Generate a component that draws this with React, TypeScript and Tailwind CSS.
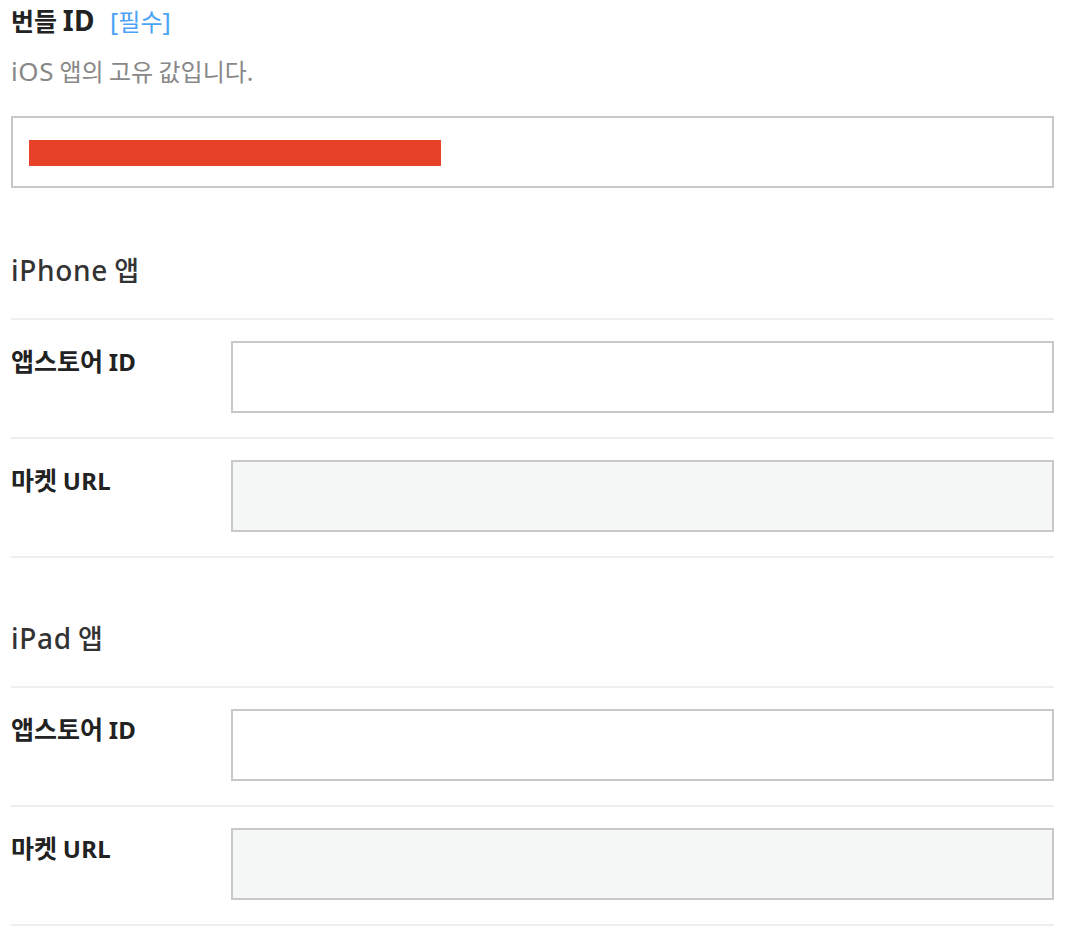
import React from "react";

const font = { fontFamily: '"Noto Sans CJK KR", "Noto Sans", sans-serif' };

function Row({ label, latin, disabled }: { label: string; latin: string; disabled?: boolean }) {
  return (
    <div className="flex border-t-2 border-[#eeeeee] pt-[21px] pb-[24px]">
      <div className="w-[220px] shrink-0 pt-[3px]">
        <div className="h-[32px] whitespace-nowrap text-[25px] leading-[32px] font-bold text-[#222222]">
          {label}{" "}
          <span className="font-['Noto_Sans'] text-[24px] tracking-[0.3px]">{latin}</span>
        </div>
      </div>
      <div
        className={`h-[72px] flex-1 border-2 border-[#c8c8c8] ${disabled ? "bg-[#f6f8f8]" : "bg-white"}`}
      />
    </div>
  );
}

function Section({ latin, top }: { latin: string; top: string }) {
  return (
    <div>
      <div
        className={`${top} mb-[30px] h-[36px] whitespace-nowrap text-[27px] leading-[36px] font-medium text-[#333333]`}
      >
        <span className="font-['Noto_Sans'] text-[28px] tracking-[0.7px]">{latin}</span> 앱
      </div>
      <Row label="앱스토어" latin="ID" />
      <Row label="마켓" latin="URL" disabled />
      <div className="h-[2px] bg-[#eeeeee]" />
    </div>
  );
}

export default function App() {
  return (
    <div className="min-h-[942px] w-[1066px] bg-white" style={font}>
      <div className="ml-[11px] w-[1043px] pt-[4px]">
        <div className="flex h-[32px] items-baseline gap-[15px] whitespace-nowrap leading-[32px]">
          <span className="text-[25px] font-bold text-[#222222]">
            번들 <span className="font-['Noto_Sans'] text-[28px] tracking-[0.5px]">ID</span>
          </span>
          <span className="text-[24px] text-[#4aa3f5]">
            <span className="font-['Noto_Sans'] text-[25px]">[</span>필수
            <span className="font-['Noto_Sans'] text-[25px]">]</span>
          </span>
        </div>
        <div className="mt-[20px] h-[30px] whitespace-nowrap text-[24px] leading-[30px] text-[#888888]">
          <span className="font-['Noto_Sans'] text-[26px] tracking-[0.6px]">iOS</span> 앱의 고유 값입니다.
        </div>
        <div className="mt-[30px] h-[72px] border-2 border-[#c8c8c8] bg-white pl-[16px] pt-[22px]">
          <div className="h-[26px] w-[412px] bg-[#e8412a]" />
        </div>
        <Section latin="iPhone" top="mt-[64px]" />
        <Section latin="iPad" top="mt-[62px]" />
      </div>
    </div>
  );
}
